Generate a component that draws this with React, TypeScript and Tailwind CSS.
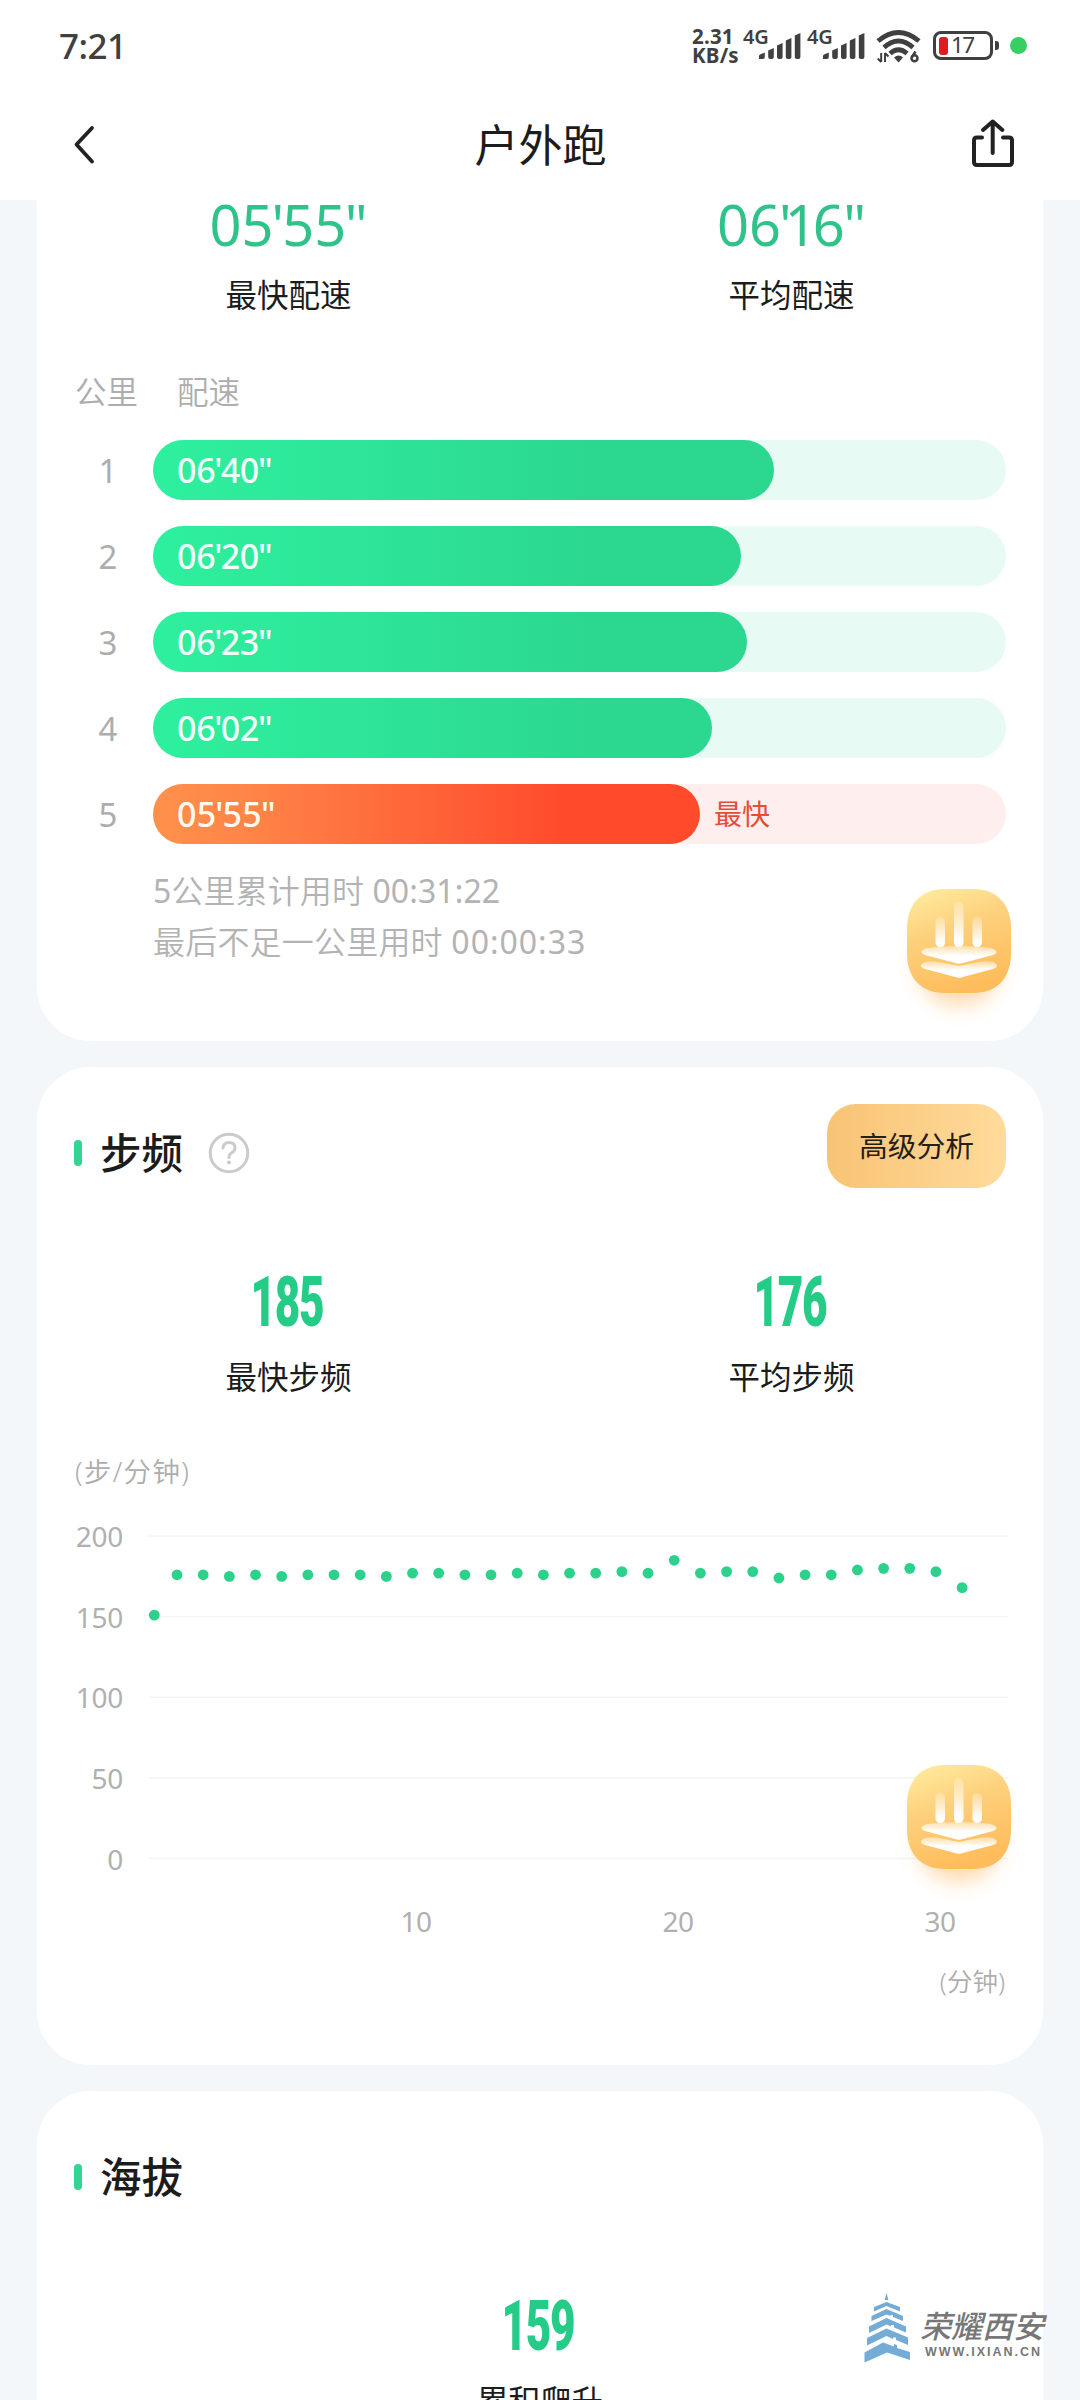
import React from "react";

const splits = [
  { km: 1, pace: "06'40\"", width: 621 },
  { km: 2, pace: "06'20\"", width: 588 },
  { km: 3, pace: "06'23\"", width: 594 },
  { km: 4, pace: "06'02\"", width: 559 },
  { km: 5, pace: "05'55\"", width: 547, fastest: true },
];

// steps per minute, one sample a minute
const cadence = [
  151, 176, 176, 175, 176, 175, 176, 176, 176, 175, 177, 177, 176, 176, 177, 176,
  177, 177, 178, 177, 185, 177, 178, 178, 174, 176, 176, 179, 180, 180, 178, 168,
];

function Signal() {
  return (
    <svg className="mt-[33px] -ml-[10px] h-[26px] w-[42px]" viewBox="0 0 42 26" fill="#404040">
      <path d="M0 26v-3q0-1 1-1.500L5.800 19.500V24q0 2-2 2z" />
      <path d="M9.200 17.500 14.800 15v9q0 2-2 2h-1.600q-2 0-2-2z" />
      <path d="M18 12.500 23.600 10v14q0 2-2 2H20q-2 0-2-2z" />
      <path d="M26.800 7.500 32.400 5v19q0 2-2 2h-1.600q-2 0-2-2z" />
      <path d="M35.800 2.500 41.400 0v24q0 2-2 2h-1.600q-2 0-2-2z" />
    </svg>
  );
}

function StatusBar() {
  return (
    <div className="flex h-[90px] items-start pl-[59px] text-[#404040]">
      <div className="mt-[26px] w-[633px] text-[35px] leading-[40px] font-medium tracking-[-0.5px]">7:21</div>
      <div className="mt-[27px] w-[51px] text-[20.5px] leading-[18.500px] font-bold">
        <div className="tracking-[0.2px]">2.31</div>
        <div className="tracking-[0.2px]">KB/s</div>
      </div>
      <div className="mt-[27px] w-[26px] text-[20px] leading-[20px] font-semibold tracking-[-0.3px]">4G</div>
      <Signal />
      <div className="mt-[27px] ml-[6px] w-[26px] text-[20px] leading-[20px] font-semibold tracking-[-0.3px]">4G</div>
      <Signal />
      <svg className="mt-[29px] ml-[11px] h-[34px] w-[46px]" viewBox="0 0 46 34" fill="none" stroke="#404040">
        <g strokeWidth="4.8">
          <path d="M2 12Q22.500-5 43 12" />
          <path d="M8 18.500Q22.500 5.500 37 18.500" />
          <path d="M14 24.500Q22.500 17 31 24.500" />
        </g>
        <path d="M18 28.500q4.500-4 9 0l-4.500 5z" fill="#404040" stroke="none" />
        <path d="M5.200 24v9M5.200 33l-3.500-3.500M9 33v-9M9 24l3.500 3.500" strokeWidth="2" />
        <circle cx="38.500" cy="29.200" r="3" strokeWidth="2.500" />
        <path d="M35.700 28.500 39.500 22.500" strokeWidth="2.500" />
      </svg>
      <div className="mt-[31px] ml-[11px] flex h-[29px] w-[60px] items-center rounded-[8px] border-[3px] border-[#404040] pl-[3px]">
        <div className="h-[18px] w-[9px] rounded-[3px] bg-[#e01b1e]" />
        <div className="ml-[3px] text-[22.500px] leading-none font-normal tracking-[-1.500px]">17</div>
      </div>
      <div className="mt-[41px] ml-[2px] h-[9px] w-[4px] rounded-r-[3px] bg-[#404040]" />
      <div className="mt-[37px] ml-[11px] h-[17px] w-[17px] rounded-full bg-[#37cf63]" />
    </div>
  );
}

function NavBar() {
  return (
    <div className="flex h-[110px] items-start justify-between pr-[64px] pl-[72px]">
      <svg className="mt-[34px] h-[42px] w-[26px]" viewBox="0 0 26 42" fill="none" stroke="#222" strokeWidth="3.8" strokeLinecap="round" strokeLinejoin="round">
        <path d="M20 4 4.500 20.500 20 37.500" />
      </svg>
      <h1 className="mt-[25px] ml-[14px] text-[44px] leading-[60px] font-normal text-[#1c1c1c]">户外跑</h1>
      <svg className="mt-[27px] h-[52px] w-[47px]" viewBox="0 0 47 52" fill="none" stroke="#222" strokeWidth="4" strokeLinecap="round" strokeLinejoin="round">
        <path d="M13 20.500H8Q5 20.500 5 23.500V45Q5 48 8 48H40Q43 48 43 45V23.500Q43 20.500 40 20.500H34" />
        <path d="M23.700 36V4.500M14 13 23.700 4.500 33.400 13" />
      </svg>
    </div>
  );
}

function CoachBadge({ className, id }: { className: string; id: string }) {
  return (
    <svg className={className} viewBox="0 0 104 104" overflow="visible">
      <defs>
        <linearGradient id={id + "bg"} x1="0.15" y1="0" x2="0.5" y2="1">
          <stop offset="0" stopColor="#ffeb9e" />
          <stop offset="0.42" stopColor="#fdd07c" />
          <stop offset="1" stopColor="#febc5b" />
        </linearGradient>
        <linearGradient id={id + "bar"} x1="0" y1="0" x2="0" y2="1">
          <stop offset="0" stopColor="#fff" stopOpacity="0.2" />
          <stop offset="0.85" stopColor="#fff" />
        </linearGradient>
        <linearGradient id={id + "wing"} x1="0" y1="0" x2="0" y2="1">
          <stop offset="0" stopColor="#fff" stopOpacity="0.4" />
          <stop offset="0.55" stopColor="#fff" />
        </linearGradient>
        <filter id={id + "blur"} x="-50%" y="-50%" width="200%" height="200%">
          <feGaussianBlur stdDeviation="10" />
        </filter>
      </defs>
      <rect x="12" y="34" width="80" height="82" rx="36" fill="#ffb65c" opacity="0.5" filter={`url(#${id}blur)`} />
      <path
        d="M38 0H66C90 0 104 15 104 40V64C104 89 90 104 66 104H38C14 104 0 89 0 64V40C0 15 14 0 38 0Z"
        fill={`url(#${id}bg)`}
      />
      <rect x="28.500" y="28" width="9.500" height="30" rx="4.500" fill={`url(#${id}bar)`} />
      <rect x="47" y="13" width="9.500" height="45" rx="4.500" fill={`url(#${id}bar)`} />
      <rect x="65.500" y="28" width="9.500" height="30" rx="4.500" fill={`url(#${id}bar)`} />
      <path d="M20 59Q52 55 84 59Q94 62.500 86 66L54 74.500Q52 75 50 74.500L18 66Q10 62.500 20 59Z" fill={`url(#${id}wing)`} />
      <path d="M18 73Q24 71.500 32 73L50 76.500Q52 77 54 76.500L72 73Q80 71.500 86 73Q94 77 86 80L54 88.500Q52 89 50 88.500L18 80Q10 77 18 73Z" fill={`url(#${id}wing)`} />
    </svg>
  );
}

// Minutes and seconds with tightened marks and a narrow figure one.
function Pace({ value }: { value: string }) {
  return (
    <span className="whitespace-nowrap">
      {value.split("").map((c, i) => (
        <span
          key={i}
          className={c === "'" ? "-mx-[0.035em]" : c === "1" ? "-mr-[0.07em] -ml-[0.09em]" : c === '"' ? "-ml-[0.03em]" : ""}
        >
          {c}
        </span>
      ))}
    </span>
  );
}

function PaceStat({ value, label }: { value: string; label: string }) {
  return (
    <div className="flex flex-1 flex-col items-center">
      <div className="h-[56px] text-[56px] leading-[49px] text-[#2fc389]">
        <Pace value={value} />
      </div>
      <div className="mt-[19px] text-[31.500px] leading-[40px] text-[#1c1c1c]">{label}</div>
    </div>
  );
}

function Stat({ value, label }: { value: string; label: string }) {
  return (
    <div className="flex flex-1 flex-col items-center">
      <div className="mr-[4px] h-[70px] scale-x-[0.63] font-[Roboto] text-[70px] leading-[73px] font-black tracking-[-2px] text-[#24cc87]">{value}</div>
      <div className="mt-[21px] text-[31.500px] leading-[40px] text-[#1c1c1c]">{label}</div>
    </div>
  );
}

function SectionTitle({ children }: { children: React.ReactNode }) {
  return (
    <div className="flex items-center">
      <div className="h-[26px] w-[8px] rounded-full bg-[#2fd694]" />
      <h2 className="ml-[18px] text-[41.500px] leading-[54px] font-medium text-[#1c1c1c]">{children}</h2>
    </div>
  );
}

function PaceCard() {
  return (
    <section className="relative h-[841px] rounded-b-[54px] bg-white px-[37px]">
      <div className="-mx-[37px] flex">
        <PaceStat value={"05'55\""} label="最快配速" />
        <PaceStat value={"06'16\""} label="平均配速" />
      </div>
      <div className="mt-[57px] flex text-[31.500px] leading-[40px] font-[350] text-[#adadad]">
        <div className="w-[103px] pl-[1px]">公里</div>
        <div>配速</div>
      </div>
      <div className="mt-[28px] flex flex-col gap-[26px]">
        {splits.map((s) => (
          <div key={s.km} className="flex h-[60px] items-center">
            <div className="w-[68px] text-center text-[33px] leading-none text-[#adadad]">{s.km}</div>
            <div className={s.fastest ? "ml-[11px] flex h-full w-[853px] items-center rounded-full bg-[#feeeee]" : "ml-[11px] flex h-full w-[853px] items-center rounded-full bg-[#e7faf4]"}>
              <div
                className={
                  s.fastest
                    ? "flex h-full items-center rounded-full bg-[linear-gradient(90deg,#ff914b_0px,#ff8548_90px,#ff4b2c_410px)] pl-[24px] text-[34px] leading-none font-medium tracking-[0.3px] text-[#fffaf0]"
                    : "flex h-full items-center rounded-full bg-[linear-gradient(90deg,#2df09e_0px,#2eea9b_110px,#2cd890_430px)] pl-[24px] text-[34px] leading-none font-medium tracking-[-0.3px] text-[#effff8]"
                }
                style={{ width: s.width }}
              >
                <Pace value={s.pace} />
              </div>
              {s.fastest && <div className="ml-[14px] text-[28px] leading-none text-[#e64c38]">最快</div>}
            </div>
          </div>
        ))}
      </div>
      <div className="mt-[21px] pl-[79px] text-[32px] leading-[51px] font-[350] text-[#b3b3b3]">
        <div className="tracking-[0.100px]">
          <span className="font-normal">5</span>公里累计用时 <span className="font-normal">00:31:22</span>
        </div>
        <div className="tracking-[0.200px]">
          最后不足一公里用时 <span className="font-normal tracking-[1px]">00:00:33</span>
        </div>
      </div>
      <CoachBadge id="pace" className="absolute top-[689px] right-[32px] h-[104px] w-[104px]" />
    </section>
  );
}

function CadenceChart() {
  const y = (v: number) => 352.500 - v * 1.612;
  const x = (t: number) => (t === 0 ? 117.300 : 140 + (t - 1) * 26.170);
  return (
    <svg className="block h-[440px] w-[1006px]" viewBox="0 0 1006 440" fontSize="28" fill="#b0b0b0">
      {[200, 150, 100, 50, 0].map((v) => (
        <g key={v}>
          <rect x="112" y={y(v) - 0.75} width="859" height="1.5" fill="#f4f4f4" />
          <text x="86" y={y(v) + 11} textAnchor="end" letterSpacing="-0.3">{v}</text>
        </g>
      ))}
      {cadence.map((v, t) => (
        <circle key={t} cx={x(t)} cy={y(v)} r="5.400" fill="#2cd18c" />
      ))}
      <text x="379" y="425.500" textAnchor="middle" letterSpacing="-0.5">10</text>
      <text x="641" y="425.500" textAnchor="middle" letterSpacing="-0.5">20</text>
      <text x="903" y="425.500" textAnchor="middle" letterSpacing="-0.5">30</text>
    </svg>
  );
}

function CadenceCard() {
  return (
    <section className="relative h-[998px] rounded-[54px] bg-white px-[37px] pt-[37px]">
      <div className="flex justify-between">
        <div className="mt-[22px] flex h-[54px] items-center">
          <SectionTitle>步频</SectionTitle>
          <svg className="ml-[25px] h-[42px] w-[42px]" viewBox="0 0 42 42" fill="none" stroke="#cbcbcb" strokeWidth="3">
            <circle cx="21" cy="21" r="18.800" />
            <path d="M15 16Q15.500 10.500 21 10.500Q27 10.500 27 16Q27 19 23.500 21Q21 22.500 21 25.500" strokeLinecap="round" />
            <circle cx="21" cy="30.500" r="2" fill="#cbcbcb" stroke="none" />
          </svg>
        </div>
        <button className="h-[84px] w-[179px] rounded-[29px] bg-linear-to-r from-[#f8c374] to-[#ffdb9b] text-[28.800px] leading-[40px] text-[#242018]">高级分析</button>
      </div>
      <div className="-mx-[37px] mt-[78px] flex">
        <Stat value="185" label="最快步频" />
        <Stat value="176" label="平均步频" />
      </div>
      <div className="mt-[57px] pl-[1px] text-[27.500px] leading-[36px] font-[350] tracking-[1.300px] text-[#adadad]">(步/分钟)</div>
      <div className="-mx-[37px] mt-[16px]">
        <CadenceChart />
      </div>
      <div className="mt-[17px] pr-[1px] text-right text-[25.500px] leading-[36px] font-[350] text-[#adadad]">(分钟)</div>
      <CoachBadge id="cadence" className="absolute top-[698px] right-[32px] h-[104px] w-[104px]" />
    </section>
  );
}

function AltitudeCard() {
  return (
    <section className="h-[500px] rounded-t-[54px] bg-white px-[37px] pt-[59px]">
      <SectionTitle>海拔</SectionTitle>
      <div className="-mx-[37px] mt-[86px] flex">
        <Stat value="159" label="累积爬升" />
      </div>
    </section>
  );
}

function SiteMark() {
  return (
    <div className="absolute top-[2293px] left-[863px] flex">
      <svg className="h-[70px] w-[48px]" viewBox="0 0 48 70" fill="#74acd6">
        <path d="M23.500 0 25.500 7H21.500Z" />
        <path d="M23.500 9 37 14V18.500L23.500 13 11 18.500V14Z" />
        <path d="M23.500 16 40 23V28L30 24V22H27.500V23L23.500 21.500 8.500 28V23Z" />
        <path d="M23.500 25 43 33.500V39.500L31 34.500V32H28V33.500L23.500 31.500 6 40V33.500Z" />
        <path d="M23.500 35.500 45 44.500V52L33 47V44.500H30V46L23.500 43 4 52.500V45Z" />
        <path d="M20 49.500 31 53.500V51L34 52V55L47 59V67L24 59.500 1.500 69.500V59.500Z" />
      </svg>
      <div className="ml-[9px] w-[128px] text-[#777]">
        <div className="mt-[14px] text-[31px] leading-[38px] font-medium italic">荣耀西安</div>
        <div className="ml-[5px] font-['Liberation_Sans'] text-[12.500px] leading-[14px] font-bold tracking-[2px] whitespace-nowrap">WWW.IXIAN.CN</div>
      </div>
    </div>
  );
}

export default function App() {
  return (
    <div className="relative h-[2400px] w-[1080px] overflow-hidden bg-[#f3f7fa] font-['Noto_Sans','Noto_Sans_CJK_SC',sans-serif]">
      <header className="h-[200px] bg-white">
        <StatusBar />
        <NavBar />
      </header>
      <main className="flex flex-col gap-[26px] px-[37px]">
        <PaceCard />
        <CadenceCard />
        <AltitudeCard />
      </main>
      <SiteMark />
    </div>
  );
}
